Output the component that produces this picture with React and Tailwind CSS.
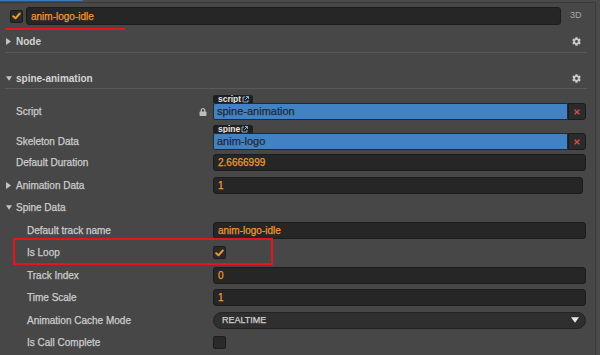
import React from "react";
import { FaCog, FaLock, FaTimes } from "react-icons/fa";

const ORANGE = "text-[#ee9833]";
const THICK = "[-webkit-text-stroke:0.25px_currentColor]";

function Check() {
  return (
    <svg width="9" height="8" viewBox="0 0 9 8">
      <path d="M1.2 4.2 L3.5 6.3 L7.8 1.5" fill="none" stroke="#ee9833" strokeWidth="2" strokeLinecap="round" strokeLinejoin="round" />
    </svg>
  );
}

function CheckBox({ checked }) {
  return (
    <div className="w-[13px] h-[13px] rounded-[2px] bg-[#2a2a2a] border border-[#1d1d1d] flex items-center justify-center">
      {checked && <Check />}
    </div>
  );
}

function TriRight() {
  return (
    <svg width="5" height="7" viewBox="0 0 5 7">
      <path d="M0 0 L5 3.5 L0 7 Z" fill="#c4c4c4" />
    </svg>
  );
}

function TriDown({ color = "#c4c4c4", w = 7, h = 5 }) {
  return (
    <svg width={w} height={h} viewBox="0 0 7 5">
      <path d="M0 0 L7 0 L3.5 5 Z" fill={color} />
    </svg>
  );
}

function ExtIcon() {
  return (
    <svg width="7" height="7" viewBox="0 0 7 7" className="ml-[1px]">
      <path d="M3 1 H1 V6 H6 V4" fill="none" stroke="#7fb0e0" strokeWidth="1" />
      <path d="M4 0.5 H6.5 V3 M6.5 0.5 L3.2 3.8" fill="none" stroke="#7fb0e0" strokeWidth="1" />
    </svg>
  );
}

function Header({ title, open }) {
  return (
    <div className="flex items-center h-full pl-[1px] pr-[6px]">
      <div className="w-[10px] flex items-center">{open ? <TriDown w={6} h={5} /> : <TriRight />}</div>
      <span className="font-bold text-[10px] text-[#d4d4d4]">{title}</span>
      <div className="flex-1" />
      <FaCog className="text-[#c9c9c9]" size={9} />
    </div>
  );
}

function Label({ children, indent }) {
  return (
    <div className={`w-[213px] shrink-0 text-[10px] text-[#cdcdcd] ${THICK} ${indent ? "pl-[27px]" : "pl-[16px]"}`}>
      {children}
    </div>
  );
}

function Field({ children }) {
  return (
    <div className={`flex-1 h-[17px] rounded-[3px] bg-[#262626] border border-[#1c1c1c] flex items-center pl-[4px] text-[10px] ${ORANGE} ${THICK}`}>
      {children}
    </div>
  );
}

function AssetRow({ tag, label, value, lock }) {
  return (
    <div className="flex flex-col">
      <div className="flex">
        <div className="w-[213px] shrink-0" />
        <div className="w-[40px] h-[8px] rounded-t-[2px] bg-[#1f1f1f] flex items-center pl-[5px]">
          <span className="font-bold text-[8.5px] leading-[8px] text-[#e6e6e6]">{tag}</span>
          <ExtIcon />
        </div>
      </div>
      <div className="flex items-center h-[17px] pr-[9px]">
        <div className={`w-[213px] shrink-0 flex items-center pl-[16px] pr-[6px] text-[10px] text-[#cdcdcd] ${THICK}`}>
          <span>{label}</span>
          <div className="flex-1" />
          {lock && <FaLock className="text-[#bdbdbd]" size={8} />}
        </div>
        <div className={`flex-1 h-[17px] bg-[#4382c2] border border-[#1f2a36] rounded-l-[2px] flex items-center pl-[3px] text-[11px] text-[#1d2a38] ${THICK}`}>
          {value}
        </div>
        <div className="w-[18px] h-[17px] bg-[#2b2b2b] border border-[#1c1c1c] rounded-r-[3px] flex items-center justify-center">
          <FaTimes className="text-[#d04c4c]" size={8} />
        </div>
      </div>
    </div>
  );
}

function Row({ children, pr = "pr-[9px]" }) {
  return <div className={`flex items-center h-[22.5px] ${pr}`}>{children}</div>;
}

export default function App() {
  return (
    <div
      className="relative w-[600px] h-[355px] overflow-hidden bg-[#4a4a4a]"
      style={{ fontFamily: '"Liberation Sans", Arial, sans-serif' }}
    >
      <div className="h-[1px] w-[83px] bg-[#3b76bf]" />
      <div className="h-[1px]" />
      <div className="w-[596px] h-[353px] border-t border-r border-[#393939] bg-[#474747] flex flex-col">
        {/* Name row */}
        <div className="flex items-center h-[18px] mt-[4px] pl-[10px]">
          <CheckBox checked />
          <div className={`flex-1 ml-[3px] h-[18px] rounded-[3px] bg-[#262626] border border-[#1c1c1c] flex items-center pl-[4px] text-[10px] text-[#ee9833] ${THICK}`}>
            anim-logo-idle
          </div>
          <div className="w-[34px] pl-[9px] text-[9px] text-[#a8a8a8]">3D</div>
        </div>

        {/* Node */}
        <div className="h-[6px]" />
        <div className="mx-[5px] mr-[8px] h-[22px] border-b border-[#5a5a5a]">
          <Header title="Node" />
        </div>

        {/* spine-animation */}
        <div className="h-[15px]" />
        <div className="mx-[5px] mr-[8px] h-[21px] border-b border-[#5a5a5a]">
          <Header title="spine-animation" open />
        </div>

        <div className="h-[6px]" />
        <AssetRow tag="script" label="Script" value="spine-animation" lock />
        <div className="h-[5px]" />
        <AssetRow tag="spine" label="Skeleton Data" value="anim-logo" />
        <div className="h-[1.5px]" />

        <Row>
          <Label>Default Duration</Label>
          <Field>2.6666999</Field>
        </Row>
        <Row pr="pr-[12px]">
          <div className={`w-[213px] shrink-0 flex items-center pl-[6px] text-[10px] text-[#cdcdcd] ${THICK}`}>
            <div className="w-[10px] flex items-center"><TriRight /></div>
            <span>Animation Data</span>
          </div>
          <Field>1</Field>
        </Row>
        <Row>
          <div className={`w-[213px] shrink-0 flex items-center pl-[6px] text-[10px] text-[#cdcdcd] ${THICK}`}>
            <div className="w-[10px] flex items-center"><TriDown w={6} h={5} /></div>
            <span>Spine Data</span>
          </div>
        </Row>
        <Row>
          <Label indent>Default track name</Label>
          <Field>anim-logo-idle</Field>
        </Row>
        <Row>
          <Label indent>Is Loop</Label>
          <CheckBox checked />
        </Row>
        <Row>
          <Label indent>Track Index</Label>
          <Field>0</Field>
        </Row>
        <Row>
          <Label indent>Time Scale</Label>
          <Field>1</Field>
        </Row>
        <Row>
          <Label indent>Animation Cache Mode</Label>
          <div className={`flex-1 h-[17px] rounded-full bg-[#2f2f2f] border border-[#222222] flex items-center pl-[8px] pr-[6px] text-[9px] text-[#d0d0d0] ${THICK}`}>
            <span>REALTIME</span>
            <div className="flex-1" />
            <TriDown color="#e8e8e8" w={8} h={6} />
          </div>
        </Row>
        <Row>
          <Label indent>Is Call Complete</Label>
          <CheckBox />
        </Row>
      </div>

      {/* annotations */}
      <div className="absolute left-[5px] top-[28px] w-[120px] h-[2px] bg-[#e8141c]" />
      <div className="absolute left-[13px] top-[238px] w-[260px] h-[27px] border-2 border-[#e8141c]" />
    </div>
  );
}
